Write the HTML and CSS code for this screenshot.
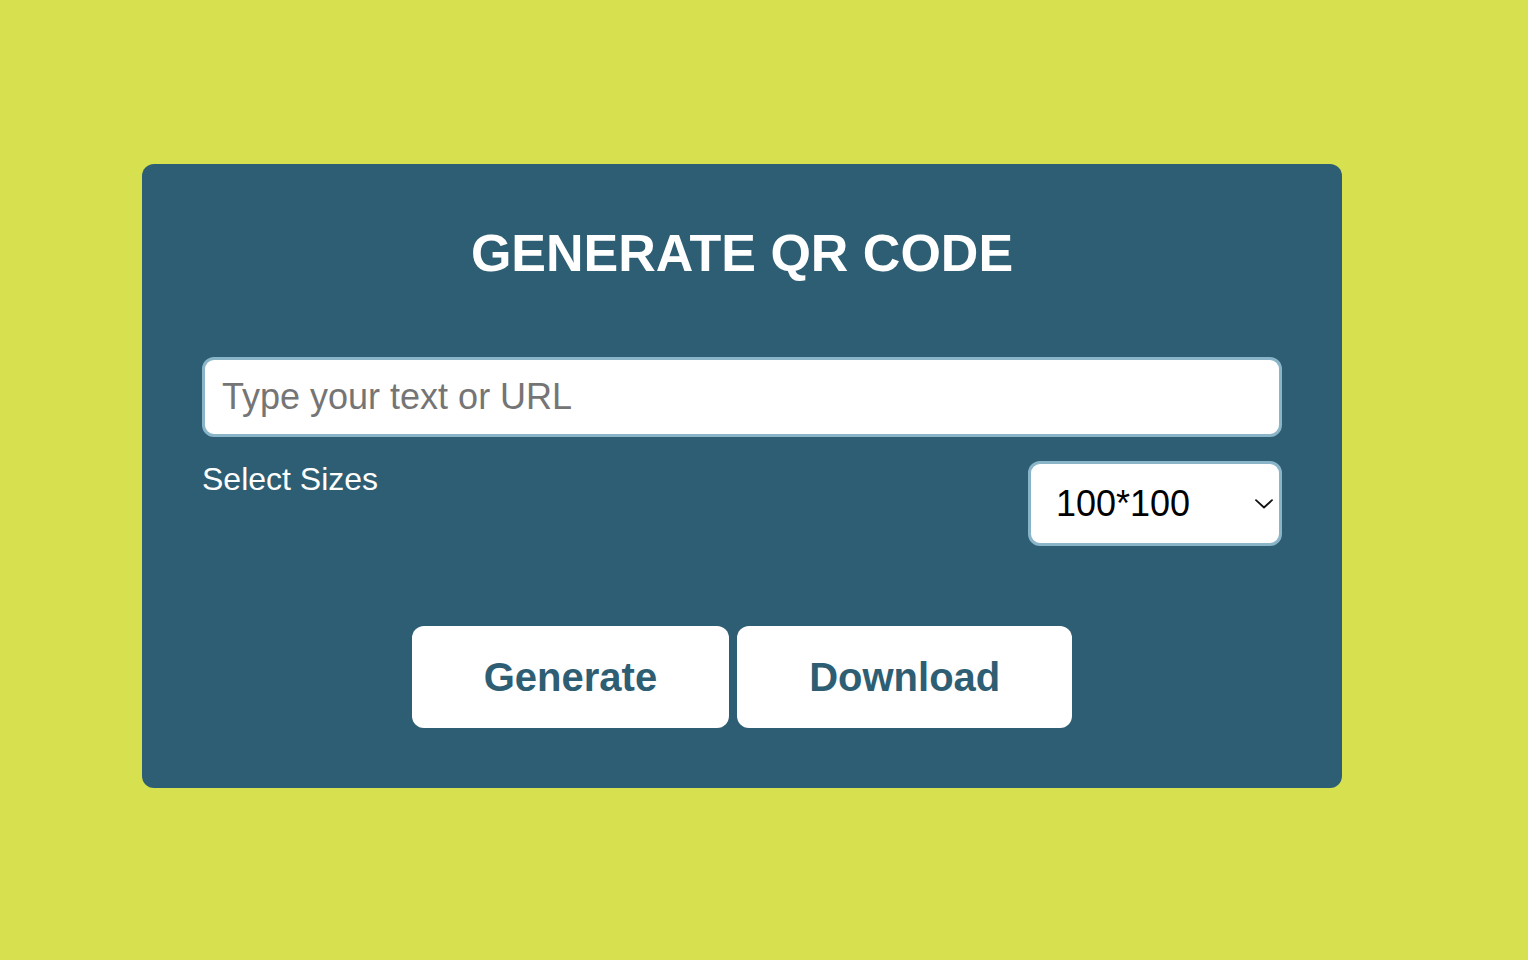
FILE: index.html
```html
<!DOCTYPE html>
<html lang="en">
<head>
<meta charset="utf-8">
<title>Generate QR Code</title>
<link rel="stylesheet" href="styles.css">
</head>
<body>
  <main class="card">
    <h1 class="title">GENERATE QR CODE</h1>
    <input class="text-input" type="text" placeholder="Type your text or URL">
    <div class="size-row">
      <label class="size-label" for="sizes">Select Sizes</label>
      <div class="select-wrap">
        <select id="sizes" class="size-select">
          <option>100*100</option>
          <option>200*200</option>
          <option>300*300</option>
        </select>
        <svg class="chevron" width="18" height="10" viewBox="0 0 18 10" aria-hidden="true">
          <path d="M1 1.2 L9 8.5 L17 1.2" fill="none" stroke="#111" stroke-width="1.8" stroke-linecap="round" stroke-linejoin="round"/>
        </svg>
      </div>
    </div>
    <div class="actions">
      <button class="btn">Generate</button>
      <button class="btn">Download</button>
    </div>
  </main>
</body>
</html>
```

FILE: styles.css
```css
html, body {
  margin: 0;
  padding: 0;
}

body {
  background: #d7e04f;
  min-height: 960px;
  padding: 164px 0 0 142px;
  box-sizing: border-box;
  font-family: "Liberation Sans", Arial, sans-serif;
}

.card {
  width: 1200px;
  box-sizing: border-box;
  background: #2e5e73;
  border-radius: 12px;
  padding: 59px 60px 60px;
  display: flex;
  flex-direction: column;
}

.title {
  margin: 0 0 74px;
  text-align: center;
  color: #ffffff;
  font-size: 52px;
  line-height: 60px;
  font-weight: 700;
}

.text-input {
  display: block;
  width: 100%;
  height: 80px;
  box-sizing: border-box;
  border: 3px solid #8ab5c8;
  border-radius: 12px;
  background: #ffffff;
  padding: 0 17px;
  font-family: "Liberation Sans", Arial, sans-serif;
  font-size: 36px;
  color: #222;
  outline: none;
}

.text-input::placeholder {
  color: #757575;
}

.size-row {
  margin-top: 24px;
  display: flex;
  justify-content: space-between;
  align-items: flex-start;
}

.size-label {
  color: #ffffff;
  font-size: 32px;
  line-height: 37px;
}

.select-wrap {
  position: relative;
  width: 254px;
  height: 85px;
}

.size-select {
  appearance: none;
  -webkit-appearance: none;
  width: 100%;
  height: 100%;
  box-sizing: border-box;
  border: 3px solid #8ab5c8;
  border-radius: 12px;
  background: #ffffff;
  padding: 0 0 0 25px;
  font-family: "Liberation Sans", Arial, sans-serif;
  font-size: 36px;
  color: #000000;
  outline: none;
}

.chevron {
  position: absolute;
  right: 9px;
  top: 38px;
  pointer-events: none;
}

.actions {
  margin-top: 80px;
  display: flex;
  justify-content: center;
  gap: 8px;
}

.btn {
  background: #ffffff;
  border: none;
  border-radius: 12px;
  padding: 0 72px;
  height: 102px;
  font-family: "Liberation Sans", Arial, sans-serif;
  font-size: 40px;
  font-weight: 700;
  color: #2e5e73;
  cursor: pointer;
}
```
